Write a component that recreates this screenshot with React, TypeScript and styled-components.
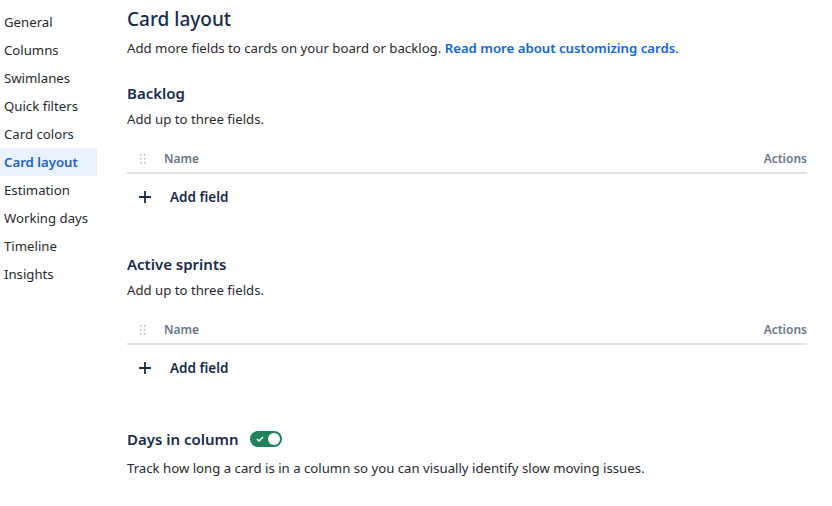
import styled, { createGlobalStyle } from "styled-components";

const GlobalStyle = createGlobalStyle`
  body {
    margin: 0;
    background: #ffffff;
    font-family: "Noto Sans", "Open Sans", sans-serif;
    color: #172b4d;
  }
`;

const Page = styled.div`
  display: flex;
  width: 832px;
  height: 506px;
  overflow: hidden;
`;

const Sidebar = styled.nav`
  width: 97px;
  flex-shrink: 0;
  padding-top: 8px;
  display: flex;
  flex-direction: column;
`;

const NavItem = styled.div<{ $active?: boolean }>`
  height: 28px;
  line-height: 28px;
  padding-left: 4px;
  font-size: 13.2px;
  color: ${(p) => (p.$active ? "#1d62d4" : "#292a2e")};
  font-weight: ${(p) => (p.$active ? 600 : 400)};
  background: ${(p) => (p.$active ? "#e9f2ff" : "transparent")};
  white-space: nowrap;
`;

const Main = styled.main`
  flex: 1;
  padding: 4px 25px 0 30px;
`;

const Title = styled.h1`
  margin: 0;
  font-size: 19px;
  font-weight: 500;
  line-height: 30px;
  color: #172b4d;
`;

const Text = styled.p<{ $top?: number }>`
  margin: ${(p) => p.$top ?? 0}px 0 0;
  font-size: 13.2px;
  line-height: 20px;
  color: #292a2e;
`;

const Link = styled.a`
  color: #0c66e4;
  font-weight: 600;
  text-decoration: none;
`;

const Heading = styled.h2<{ $top: number }>`
  margin: ${(p) => p.$top}px 0 0;
  font-size: 15px;
  font-weight: 600;
  line-height: 22px;
  color: #172b4d;
  display: flex;
  align-items: center;
  gap: 11px;
`;

const TableHead = styled.div`
  margin-top: 16px;
  height: 27px;
  padding-bottom: 0;
  display: flex;
  align-items: center;
  border-bottom: 2px solid #dfe1e6;
  font-size: 12px;
  font-weight: 600;
  color: #6b778c;
`;

const Grip = styled.span`
  width: 37px;
  padding-left: 13px;
  box-sizing: border-box;
  display: flex;
`;

const HeadName = styled.span`
  flex: 1;
`;

const AddRow = styled.div`
  height: 46px;
  display: flex;
  align-items: center;
  gap: 19px;
  padding-left: 12px;
  font-size: 13.5px;
  font-weight: 600;
  color: #172b4d;
`;

const Toggle = styled.span`
  position: relative;
  width: 32px;
  height: 16px;
  border-radius: 8px;
  background: #1f845a;
  display: inline-flex;
  align-items: center;
  padding-left: 6px;
  box-sizing: border-box;

  &::after {
    content: "";
    position: absolute;
    right: 2px;
    top: 2px;
    width: 12px;
    height: 12px;
    border-radius: 50%;
    background: #ffffff;
  }
`;

const navItems = [
  "General",
  "Columns",
  "Swimlanes",
  "Quick filters",
  "Card colors",
  "Card layout",
  "Estimation",
  "Working days",
  "Timeline",
  "Insights",
];

const GripIcon = () => (
  <svg width="6" height="10" viewBox="0 0 6 10" fill="#b3b9c4">
    {[0, 4, 8].map((y) =>
      [0, 4].map((x) => <rect key={`${x}-${y}`} x={x} y={y} width="1.5" height="1.5" />),
    )}
  </svg>
);

const PlusIcon = () => (
  <svg width="12" height="12" viewBox="0 0 12 12">
    <path d="M6 0v12M0 6h12" stroke="#172b4d" strokeWidth="1.8" />
  </svg>
);

const FieldTable = () => (
  <>
    <TableHead>
      <Grip>
        <GripIcon />
      </Grip>
      <HeadName>Name</HeadName>
      <span>Actions</span>
    </TableHead>
    <AddRow>
      <PlusIcon />
      Add field
    </AddRow>
  </>
);

export default function App() {
  return (
    <>
      <GlobalStyle />
      <Page>
        <Sidebar>
          {navItems.map((item) => (
            <NavItem key={item} $active={item === "Card layout"}>
              {item}
            </NavItem>
          ))}
        </Sidebar>
        <Main>
          <Title>Card layout</Title>
          <Text $top={4}>
            Add more fields to cards on your board or backlog.{" "}
            <Link href="#">Read more about customizing cards</Link>.
          </Text>
          <Heading $top={24}>Backlog</Heading>
          <Text $top={5}>Add up to three fields.</Text>
          <FieldTable />
          <Heading $top={33}>Active sprints</Heading>
          <Text $top={5}>Add up to three fields.</Text>
          <FieldTable />
          <Heading $top={37}>
            Days in column
            <Toggle>
              <svg width="8" height="6" viewBox="0 0 8 6">
                <path d="M1 3l2 2 4-4" stroke="#fff" strokeWidth="1.5" fill="none" />
              </svg>
            </Toggle>
          </Heading>
          <Text $top={8}>
            Track how long a card is in a column so you can visually identify slow moving issues.
          </Text>
        </Main>
      </Page>
    </>
  );
}
